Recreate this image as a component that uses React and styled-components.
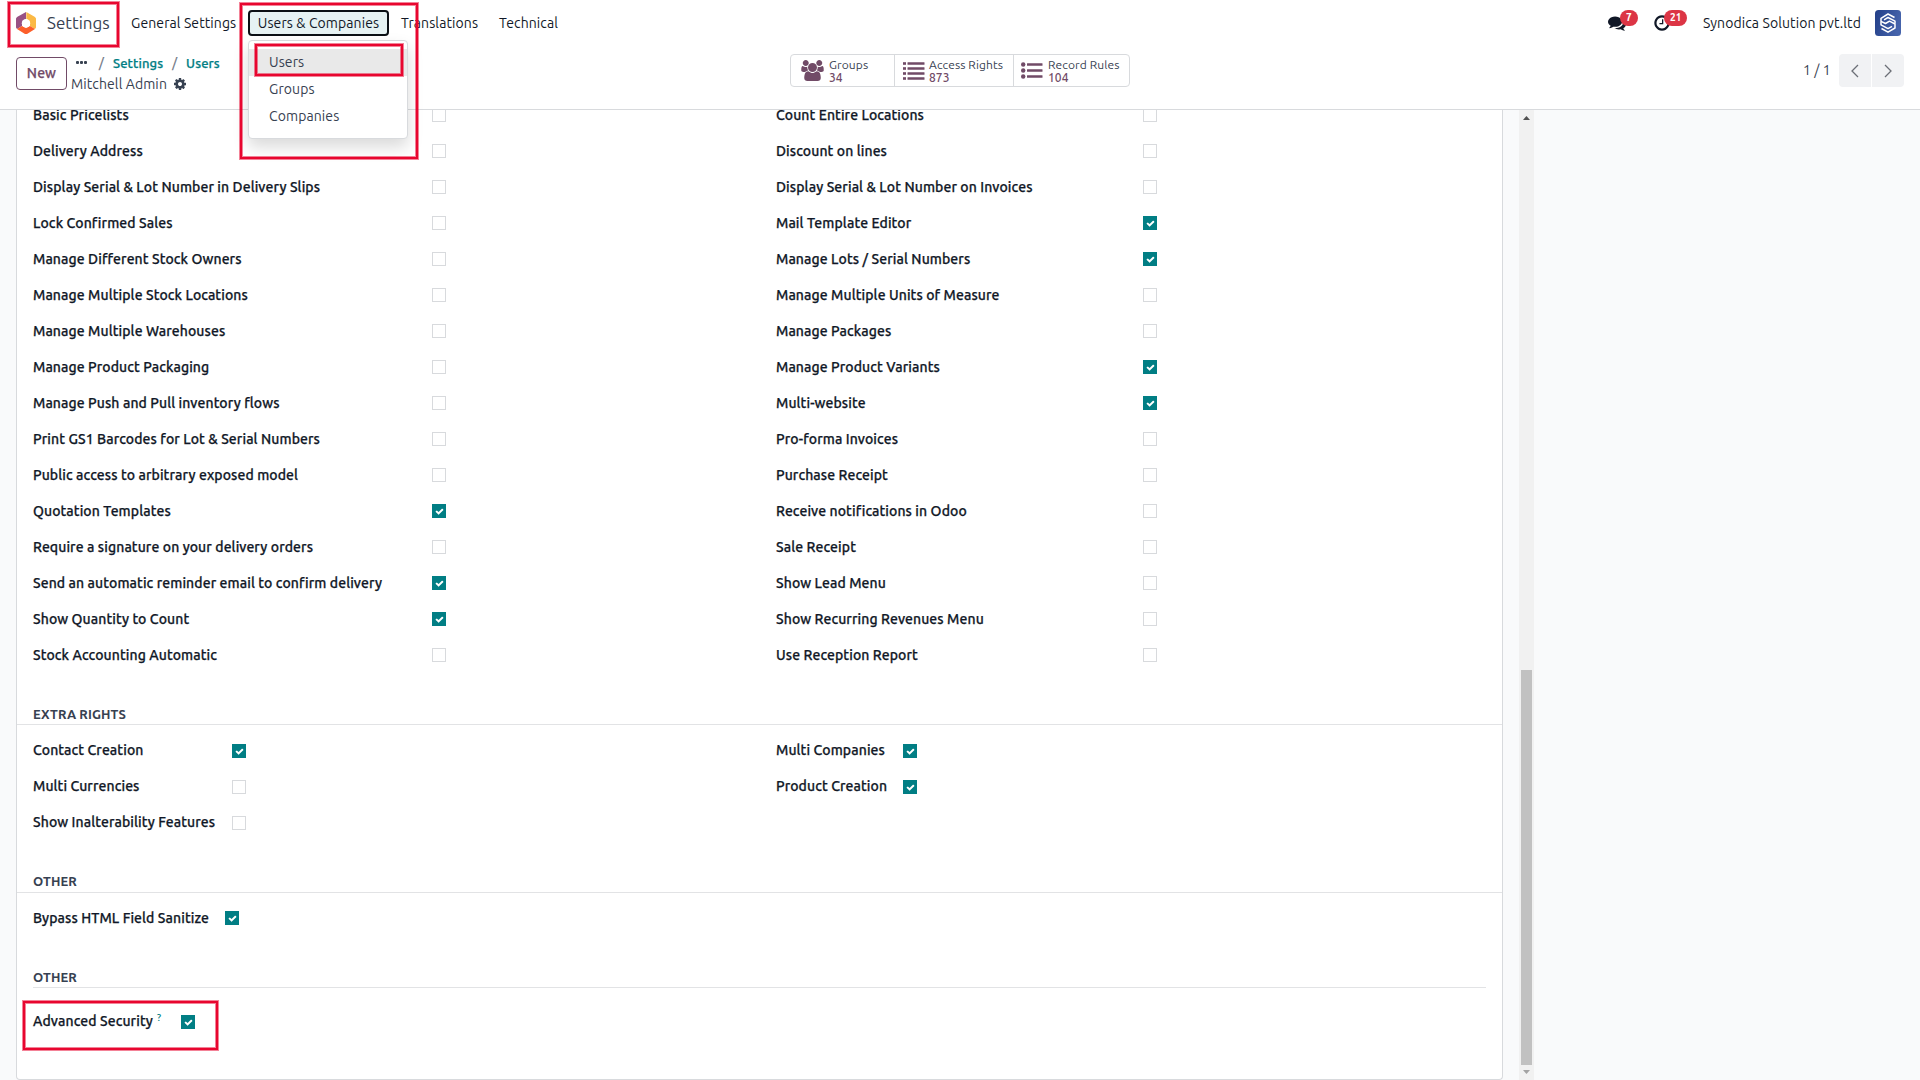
import styled, { createGlobalStyle, css } from 'styled-components';

const colors = {
  brand: '#714b67',
  teal: '#017e84',
  text: '#111827',
  muted: '#374151',
  border: '#d8dadd',
  mark: '#e8062f',
};

const technicalRows = [
  [['Basic Pricelists', false], ['Count Entire Locations', false]],
  [['Delivery Address', false], ['Discount on lines', false]],
  [['Display Serial & Lot Number in Delivery Slips', false], ['Display Serial & Lot Number on Invoices', false]],
  [['Lock Confirmed Sales', false], ['Mail Template Editor', true]],
  [['Manage Different Stock Owners', false], ['Manage Lots / Serial Numbers', true]],
  [['Manage Multiple Stock Locations', false], ['Manage Multiple Units of Measure', false]],
  [['Manage Multiple Warehouses', false], ['Manage Packages', false]],
  [['Manage Product Packaging', false], ['Manage Product Variants', true]],
  [['Manage Push and Pull inventory flows', false], ['Multi-website', true]],
  [['Print GS1 Barcodes for Lot & Serial Numbers', false], ['Pro-forma Invoices', false]],
  [['Public access to arbitrary exposed model', false], ['Purchase Receipt', false]],
  [['Quotation Templates', true], ['Receive notifications in Odoo', false]],
  [['Require a signature on your delivery orders', false], ['Sale Receipt', false]],
  [['Send an automatic reminder email to confirm delivery', true], ['Show Lead Menu', false]],
  [['Show Quantity to Count', true], ['Show Recurring Revenues Menu', false]],
  [['Stock Accounting Automatic', false], ['Use Reception Report', false]],
];

const extraRows = [
  [['Contact Creation', true], ['Multi Companies', true]],
  [['Multi Currencies', false], ['Product Creation', true]],
  [['Show Inalterability Features', false]],
];

const GlobalStyle = createGlobalStyle`
  * {
    box-sizing: border-box;
  }

  body {
    margin: 0;
    background: #f9fafb;
    color: ${colors.text};
    font-family: Ubuntu, 'Noto Sans', 'Open Sans', sans-serif;
    font-size: 14px;
    line-height: 18px;
    letter-spacing: 0.1px;
    overflow: hidden;
  }

  button {
    font: inherit;
    letter-spacing: inherit;
    color: inherit;
    background: none;
    border: 0;
    padding: 0;
  }
`;

const strong = css`
  font-weight: 500;
  -webkit-text-stroke: 0.25px currentColor;
`;

const Page = styled.div`
  width: 1920px;
  height: 1080px;
  display: flex;
  flex-direction: column;
  overflow: hidden;
`;

const Navbar = styled.nav`
  height: 46px;
  display: flex;
  align-items: center;
  padding: 0 19px 0 16px;
  background: #fff;
  white-space: nowrap;
`;

const Brand = styled.div`
  position: relative;
  width: 115px;
  display: flex;
  align-items: center;
  gap: 10px;
  font-size: 17px;
  letter-spacing: 0;
  color: ${colors.muted};
`;

const NavItem = styled.div`
  position: relative;
  width: ${({ $width }) => $width}px;
`;

const OpenMenu = styled.button`
  display: block;
  width: 141px;
  height: 26px;
  border: 2px solid #0b1015;
  border-radius: 4px;
  background: #e6f2f3;
`;

const Dropdown = styled.div`
  position: absolute;
  z-index: 5;
  top: 30px;
  left: 0;
  width: 160px;
  height: 99px;
  padding: 8px 0;
  background: #fff;
  border: 1px solid ${colors.border};
  border-radius: 4px;
  box-shadow: 0 8px 16px rgba(0, 0, 0, 0.15);
`;

const DropdownItem = styled.div`
  height: 27px;
  padding: 4px 20px;
  color: ${colors.muted};
  background: ${({ $active }) => ($active ? '#e9e9e9' : 'transparent')};
`;

// Red annotation frames drawn over the page
const Mark = styled.div`
  position: absolute;
  z-index: 10;
  pointer-events: none;
  top: ${({ $top }) => $top}px;
  left: ${({ $left }) => $left}px;
  width: ${({ $w }) => $w}px;
  height: ${({ $h }) => $h}px;
  border: 2px solid ${colors.mark};
  box-shadow: 0 0 0 1px rgba(232, 6, 47, 0.5), inset 0 0 0 1px rgba(232, 6, 47, 0.5);
`;

const Systray = styled.div`
  margin-left: auto;
  display: flex;
  align-items: center;
`;

const TrayIcon = styled.div`
  position: relative;
  display: flex;
  width: ${({ $width }) => $width}px;
`;

const Badge = styled.span`
  position: absolute;
  top: -4px;
  left: ${({ $left }) => $left}px;
  height: 16px;
  padding: 0 6px;
  border-radius: 8px;
  background: #dc3545;
  color: #fff;
  font-size: 10px;
  font-weight: 700;
  line-height: 16px;
`;

const Company = styled.span`
  width: 172px;
`;

const ControlPanel = styled.header`
  height: 64px;
  display: flex;
  align-items: flex-start;
  padding: 8px 16px 0;
  background: #fff;
  border-bottom: 1px solid ${colors.border};
`;

const NewButton = styled.button`
  width: 51px;
  height: 33px;
  margin-top: 3px;
  padding-bottom: 1px;
  border: 1px solid ${colors.brand};
  border-radius: 4px;
  color: ${colors.brand};
  ${strong}
`;

const Breadcrumb = styled.div`
  width: 719px;
  margin-left: 4px;
`;

const Crumbs = styled.div`
  display: flex;
  align-items: center;
  height: 17px;
  padding-left: 5px;
  color: ${colors.teal};
  font-size: 13px;
  ${strong}
`;

const Separator = styled.span`
  width: 23px;
  text-align: center;
  font-weight: 400;
  color: #6b7280;
`;

const Dots = styled.span`
  width: 14px;
  display: flex;
  gap: 1px;

  &::before,
  &::after,
  i {
    content: '';
    width: 3px;
    height: 3px;
    border-radius: 1px;
    background: ${colors.muted};
  }
`;

const RecordName = styled.div`
  display: flex;
  align-items: center;
  gap: 6px;
  margin-top: 4px;
  color: ${colors.muted};
`;

const StatButtons = styled.div`
  display: flex;
  height: 33px;
  border: 1px solid ${colors.border};
  border-radius: 4px;
`;

const StatButton = styled.div`
  width: ${({ $width }) => $width}px;
  display: flex;
  align-items: center;
  gap: ${({ $gap }) => $gap}px;
  padding-left: ${({ $pad }) => $pad}px;
  color: ${colors.brand};
  font-size: 12px;
  line-height: 13px;

  & + & {
    border-left: 1px solid ${colors.border};
  }
`;

const StatText = styled.div`
  color: ${colors.muted};
  white-space: nowrap;

  strong {
    display: block;
    font-weight: 500;
    color: ${colors.brand};
  }
`;

const Pager = styled.div`
  margin-left: auto;
  display: flex;
  align-items: center;
  gap: 1px;
  color: ${colors.muted};
`;

const PagerCount = styled.span`
  width: 35px;
  padding-bottom: 1px;
`;

const PagerButton = styled.button`
  width: 32px;
  height: 33px;
  display: flex;
  align-items: center;
  justify-content: center;
  background: #f1f2f4;
  border-radius: ${({ $side }) => ($side === 'left' ? '4px 0 0 4px' : '0 4px 4px 0')};
`;

const Content = styled.main`
  flex: 1;
  display: flex;
  min-height: 0;
  padding-left: 16px;
`;

const Sheet = styled.section`
  width: 1487px;
  height: 970px;
  overflow: hidden;
  background: #fff;
  border: 1px solid ${colors.border};
  border-top: 0;
  border-radius: 0 0 4px 4px;
`;

const Group = styled.div`
  display: grid;
  grid-template-columns: 743px 1fr;
  padding-left: 16px;
  margin-top: ${({ $top }) => $top}px;
`;

const Field = styled.div`
  position: relative;
  height: 36px;
  display: grid;
  grid-template-columns: ${({ $label }) => $label}px 14px;
  align-items: center;
`;

const Label = styled.label`
  ${strong}
  white-space: nowrap;

  sup {
    margin-left: 4px;
    color: ${colors.teal};
    font-size: 10px;
    line-height: 0;
    vertical-align: 5px;
    -webkit-text-stroke: 0;
  }
`;

const Box = styled.span`
  width: 14px;
  height: 14px;
  display: flex;
  align-items: center;
  justify-content: center;
  border: 1px solid ${colors.border};
  background: #fff;
  color: #fff;

  ${({ $checked }) => $checked && css`
    border-color: ${colors.teal};
    background: ${colors.teal};
  `}

  ${({ $low }) => $low && css`
    margin-top: 2px;
  `}
`;

const Heading = styled.h2`
  height: ${({ $height }) => $height}px;
  margin: 0 ${({ $inset }) => ($inset ? 16 : 0)}px;
  padding: 32px ${({ $inset }) => ($inset ? 0 : 16)}px 0;
  border-bottom: 1px solid #e2e3e5;
  color: ${colors.muted};
  font-size: 13px;
  font-weight: 700;
  text-transform: uppercase;
`;

const Scrollbar = styled.div`
  width: 15px;
  height: 970px;
  margin-left: 16px;
  display: flex;
  flex-direction: column;
  align-items: center;
  justify-content: space-between;
  padding: 6px 0;
  background: #f1f1f1;
`;

const Thumb = styled.div`
  width: 11px;
  height: 395px;
  margin: auto 0 5px;
  background: #c1c1c1;
`;

const Glyph = ({ d, width = 14, height = 14, box = '0 0 1792 1792' }) => (
  <svg width={width} height={height} viewBox={box} fill="currentColor" aria-hidden="true">
    <path d={d} />
  </svg>
);

const glyphs = {
  check: 'M1671 566q0 40-28 68l-724 724-136 136q-28 28-68 28t-68-28l-136-136-362-362q-28-28-28-68t28-68l136-136q28-28 68-28t68 28l294 295 656-657q28-28 68-28t68 28l136 136q28 28 28 68z',
  cog: 'M1152 896q0-106-75-181t-181-75-181 75-75 181 75 181 181 75 181-75 75-181zm512-109v222q0 12-8 23t-20 13l-185 28q-19 54-39 91 35 50 107 138 10 12 10 25t-9 23q-27 37-99 108t-94 71q-12 0-26-9l-138-108q-44 23-91 38-16 136-29 186-7 28-36 28h-222q-14 0-24.5-8.5t-11.5-21.5l-28-184q-49-16-90-37l-141 107q-10 9-25 9-14 0-25-11-126-114-165-168-7-10-7-23 0-12 8-23 15-21 51-66.5t54-70.5q-27-50-41-99l-183-27q-13-2-21-12.5t-8-23.5v-222q0-12 8-23t19-13l186-28q14-46 39-92-40-57-107-138-10-12-10-24 0-10 9-23 26-36 98.5-107.5t94.5-71.5q13 0 26 10l138 107q44-23 91-38 16-136 29-186 7-28 36-28h222q14 0 24.5 8.5t11.5 21.5l28 184q49 16 90 37l142-107q9-9 24-9 13 0 25 10 129 119 165 170 7 8 7 22 0 12-8 23-15 21-51 66.5t-54 70.5q26 50 41 98l183 28q13 2 21 12.5t8 23.5z',
  comments: 'M1408 768q0 139-94 257t-256.5 186.5-353.5 68.5q-86 0-176-16-124 88-278 128-36 9-86 16h-3q-11 0-20.5-8t-11.5-21q-1-3-1-6.5t.5-6.5 2-6l2.5-5 3.5-5.5 4-5 4.5-5 4-4.5q5-6 23-25t26-29.5 22.5-29 25-38.5 20.5-44q-124-72-195-177t-71-224q0-139 94-257t256.5-186.5 353.5-68.5 353.5 68.5 256.5 186.5 94 257zm384 256q0 120-71 224.5t-195 176.5q10 24 20.5 44t25 38.5 22.5 29 26 29.5 23 25q1 1 4 4.5t4.5 5 4 5 3.5 5.5l2.5 5 2 6 .5 6.5-1 6.5q-3 14-13 22t-22 7q-50-7-86-16-154-40-278-128-90 16-176 16-271 0-472-132 58 4 88 4 161 0 309-45t264-129q125-92 192-212t67-254q0-77-23-152 129 71 204 178t75 230z',
  clock: 'M1024 544v448q0 14-9 23t-23 9h-320q-14 0-23-9t-9-23v-64q0-14 9-23t23-9h224v-352q0-14 9-23t23-9h64q14 0 23 9t9 23zm416 352q0-148-73-273t-198-198-273-73-273 73-198 198-73 273 73 273 198 198 273 73 273-73 198-198 73-273zm224 0q0 209-103 385.5t-279.5 279.5-385.5 103-385.5-103-279.5-279.5-103-385.5 103-385.5 279.5-279.5 385.5-103 385.5 103 279.5 279.5 103 385.5z',
  users: 'M593 896q-162 5-265 128h-134q-82 0-138-40.5t-56-118.5q0-353 124-353 6 0 43.5 21t97.5 42.5 119 21.5q67 0 133-23-5 37-5 66 0 139 81 256zm1071 637q0 120-73 189.5t-194 69.5h-874q-121 0-194-69.5t-73-189.5q0-53 3.5-103.5t14-109 26.5-108.5 43-97.5 62-81 85.5-53.5 111.5-20q10 0 43 21.5t73 48 107 48 135 21.5 135-21.5 107-48 73-48 43-21.5q61 0 111.5 20t85.5 53.5 62 81 43 97.5 26.5 108.5 14 109 3.5 103.5zm-1024-1277q0 106-75 181t-181 75-181-75-75-181 75-181 181-75 181 75 75 181zm704 384q0 159-112.5 271.5t-271.5 112.5-271.5-112.5-112.5-271.5 112.5-271.5 271.5-112.5 271.5 112.5 112.5 271.5zm576 225q0 78-56 118.5t-138 40.5h-134q-103-123-265-128 81-117 81-256 0-29-5-66 66 23 133 23 59 0 119-21.5t97.5-42.5 43.5-21q124 0 124 353zm-128-609q0 106-75 181t-181 75-181-75-75-181 75-181 181-75 181 75 75 181z',
};

const Logo = () => (
  <svg width="21" height="22" viewBox="0 0 21 22" aria-hidden="true">
    <path d="M10 0v7l-4 3v4l-5 3-1-1.500V6.500L1 5z" fill="#985184" />
    <path d="M10.300 0 19 5l1 1.500v9L19 17l-5-3v-4l-3.700-3z" fill="#fbb945" />
    <path d="M1 17l5-3 4 2 4-2 5 3-8 5h-2z" fill="#fc5f2b" />
    <circle cx="10" cy="11.200" r="4.200" fill="#fff" />
  </svg>
);

const Avatar = () => (
  <svg width="26" height="26" viewBox="0 0 26 26" aria-hidden="true">
    <defs>
      <linearGradient id="avatar" x1="0" y1="0" x2="1" y2="0.300">
        <stop offset="0" stopColor="#223f88" />
        <stop offset="1" stopColor="#4563ab" />
      </linearGradient>
    </defs>
    <rect width="26" height="26" rx="3.500" fill="url(#avatar)" />
    <g fill="none" stroke="#fff" strokeWidth="1.500" strokeLinejoin="round">
      <path d="M19.500 7.500 13 4 6 8.300v3l4.500 2.200 4-2.300 5.500 2.800v4L13 22.200l-6.500-3.700" />
      <path d="M9 9.800 13 7.500l7 3.700v2.300M17 16.300l-4 2.300-7-3.800v-3" />
    </g>
  </svg>
);

const ListIcon = ({ round }) => {
  const rows = round ? [2.5, 8.5, 14.5] : [1.5, 6.5, 11.5, 16.5];
  return (
    <svg width="22" height="18" viewBox="0 0 22 18" fill="currentColor" aria-hidden="true">
      {rows.map((y) => (
        <g key={y}>
          {round ? <circle cx="2.200" cy={y} r="2.200" /> : <rect y={y - 1.3} width="3" height="2.600" />}
          <rect x={round ? 6 : 4.5} y={y - 1.3} width={round ? 15.5 : 17} height="2.600" rx="0.400" />
        </g>
      ))}
    </svg>
  );
};

const Chevron = ({ d }) => (
  <svg width="8" height="14" viewBox="0 0 8 14" fill="none" stroke="#6b6f76" strokeWidth="1.300" aria-hidden="true">
    <path d={d} />
  </svg>
);

const CheckField = ({ text, checked, label, low }) => (
  <Field $label={label}>
    <Label>{text}</Label>
    <Box $checked={checked} $low={low}>
      {checked && <Glyph d={glyphs.check} width={9} height={9} />}
    </Box>
  </Field>
);

const FieldGroup = ({ rows, top, labels, low }) => (
  <Group $top={top}>
    {rows.flatMap((row) => row.map(([text, checked], col) => (
      <CheckField key={text} text={text} checked={checked} label={labels[col]} low={low} />
    )))}
  </Group>
);

const App = () => (
  <Page>
    <GlobalStyle />
    <Navbar>
      <Brand>
        <Logo />
        Settings
        <Mark $top={-10} $left={-8} $w={111} $h={45} />
      </Brand>
      <NavItem $width={117}>General Settings</NavItem>
      <NavItem $width={153}>
        <OpenMenu>Users &amp; Companies</OpenMenu>
        <Dropdown>
          <DropdownItem $active>Users</DropdownItem>
          <DropdownItem>Groups</DropdownItem>
          <DropdownItem>Companies</DropdownItem>
          <Mark $top={3} $left={6} $w={148} $h={32} />
        </Dropdown>
        <Mark $top={-7} $left={-8} $w={178} $h={156} />
      </NavItem>
      <NavItem $width={98}>Translations</NavItem>
      <NavItem $width={60}>Technical</NavItem>
      <Systray>
        <TrayIcon $width={45}>
          <Glyph d={glyphs.comments} width={18} height={18} />
          <Badge $left={12}>7</Badge>
        </TrayIcon>
        <TrayIcon $width={50}>
          <Glyph d={glyphs.clock} width={18} height={18} />
          <Badge $left={11}>21</Badge>
        </TrayIcon>
        <Company>Synodica Solution pvt.ltd</Company>
        <Avatar />
      </Systray>
    </Navbar>

    <ControlPanel>
      <NewButton>New</NewButton>
      <Breadcrumb>
        <Crumbs>
          <Dots><i /></Dots>
          <Separator>/</Separator>
          Settings
          <Separator>/</Separator>
          Users
        </Crumbs>
        <RecordName>
          Mitchell Admin
          <Glyph d={glyphs.cog} />
        </RecordName>
      </Breadcrumb>
      <StatButtons>
        <StatButton $width={103} $pad={10} $gap={5}>
          <Glyph d={glyphs.users} width={23} height={21} box="0 0 1920 1792" />
          <StatText>Groups<strong>34</strong></StatText>
        </StatButton>
        <StatButton $width={119} $pad={8} $gap={4}>
          <ListIcon />
          <StatText>Access Rights<strong>873</strong></StatText>
        </StatButton>
        <StatButton $width={116} $pad={7} $gap={5}>
          <ListIcon round />
          <StatText>Record Rules<strong>104</strong></StatText>
        </StatButton>
      </StatButtons>
      <Pager>
        <PagerCount>1 / 1</PagerCount>
        <PagerButton $side="left"><Chevron d="M7 1 1 7l6 6" /></PagerButton>
        <PagerButton $side="right"><Chevron d="M1 1l6 6-6 6" /></PagerButton>
      </Pager>
    </ControlPanel>

    <Content>
      <Sheet>
        <FieldGroup rows={technicalRows} top={-13} labels={[399, 367]} />
        <Heading $height={52}>Extra Rights</Heading>
        <FieldGroup rows={extraRows} top={7} labels={[199, 127]} low />
        <Heading $height={53}>Other</Heading>
        <FieldGroup rows={[[['Bypass HTML Field Sanitize', true]]]} top={7} labels={[192]} />
        <Heading $height={52} $inset>Other</Heading>
        <Group $top={15}>
          <Field $label={148}>
            <Label>Advanced Security<sup>?</sup></Label>
            <Box $checked $low><Glyph d={glyphs.check} width={9} height={9} /></Box>
            <Mark $top={-2} $left={-10} $w={195} $h={49} />
          </Field>
        </Group>
      </Sheet>
      <Scrollbar>
        <svg width="7" height="4" viewBox="0 0 7 4"><path d="M3.500 0 7 4H0z" fill="#505050" /></svg>
        <Thumb />
        <svg width="7" height="4" viewBox="0 0 7 4"><path d="M0 0h7L3.500 4z" fill="#a3a3a3" /></svg>
      </Scrollbar>
    </Content>
  </Page>
);

export default App;
